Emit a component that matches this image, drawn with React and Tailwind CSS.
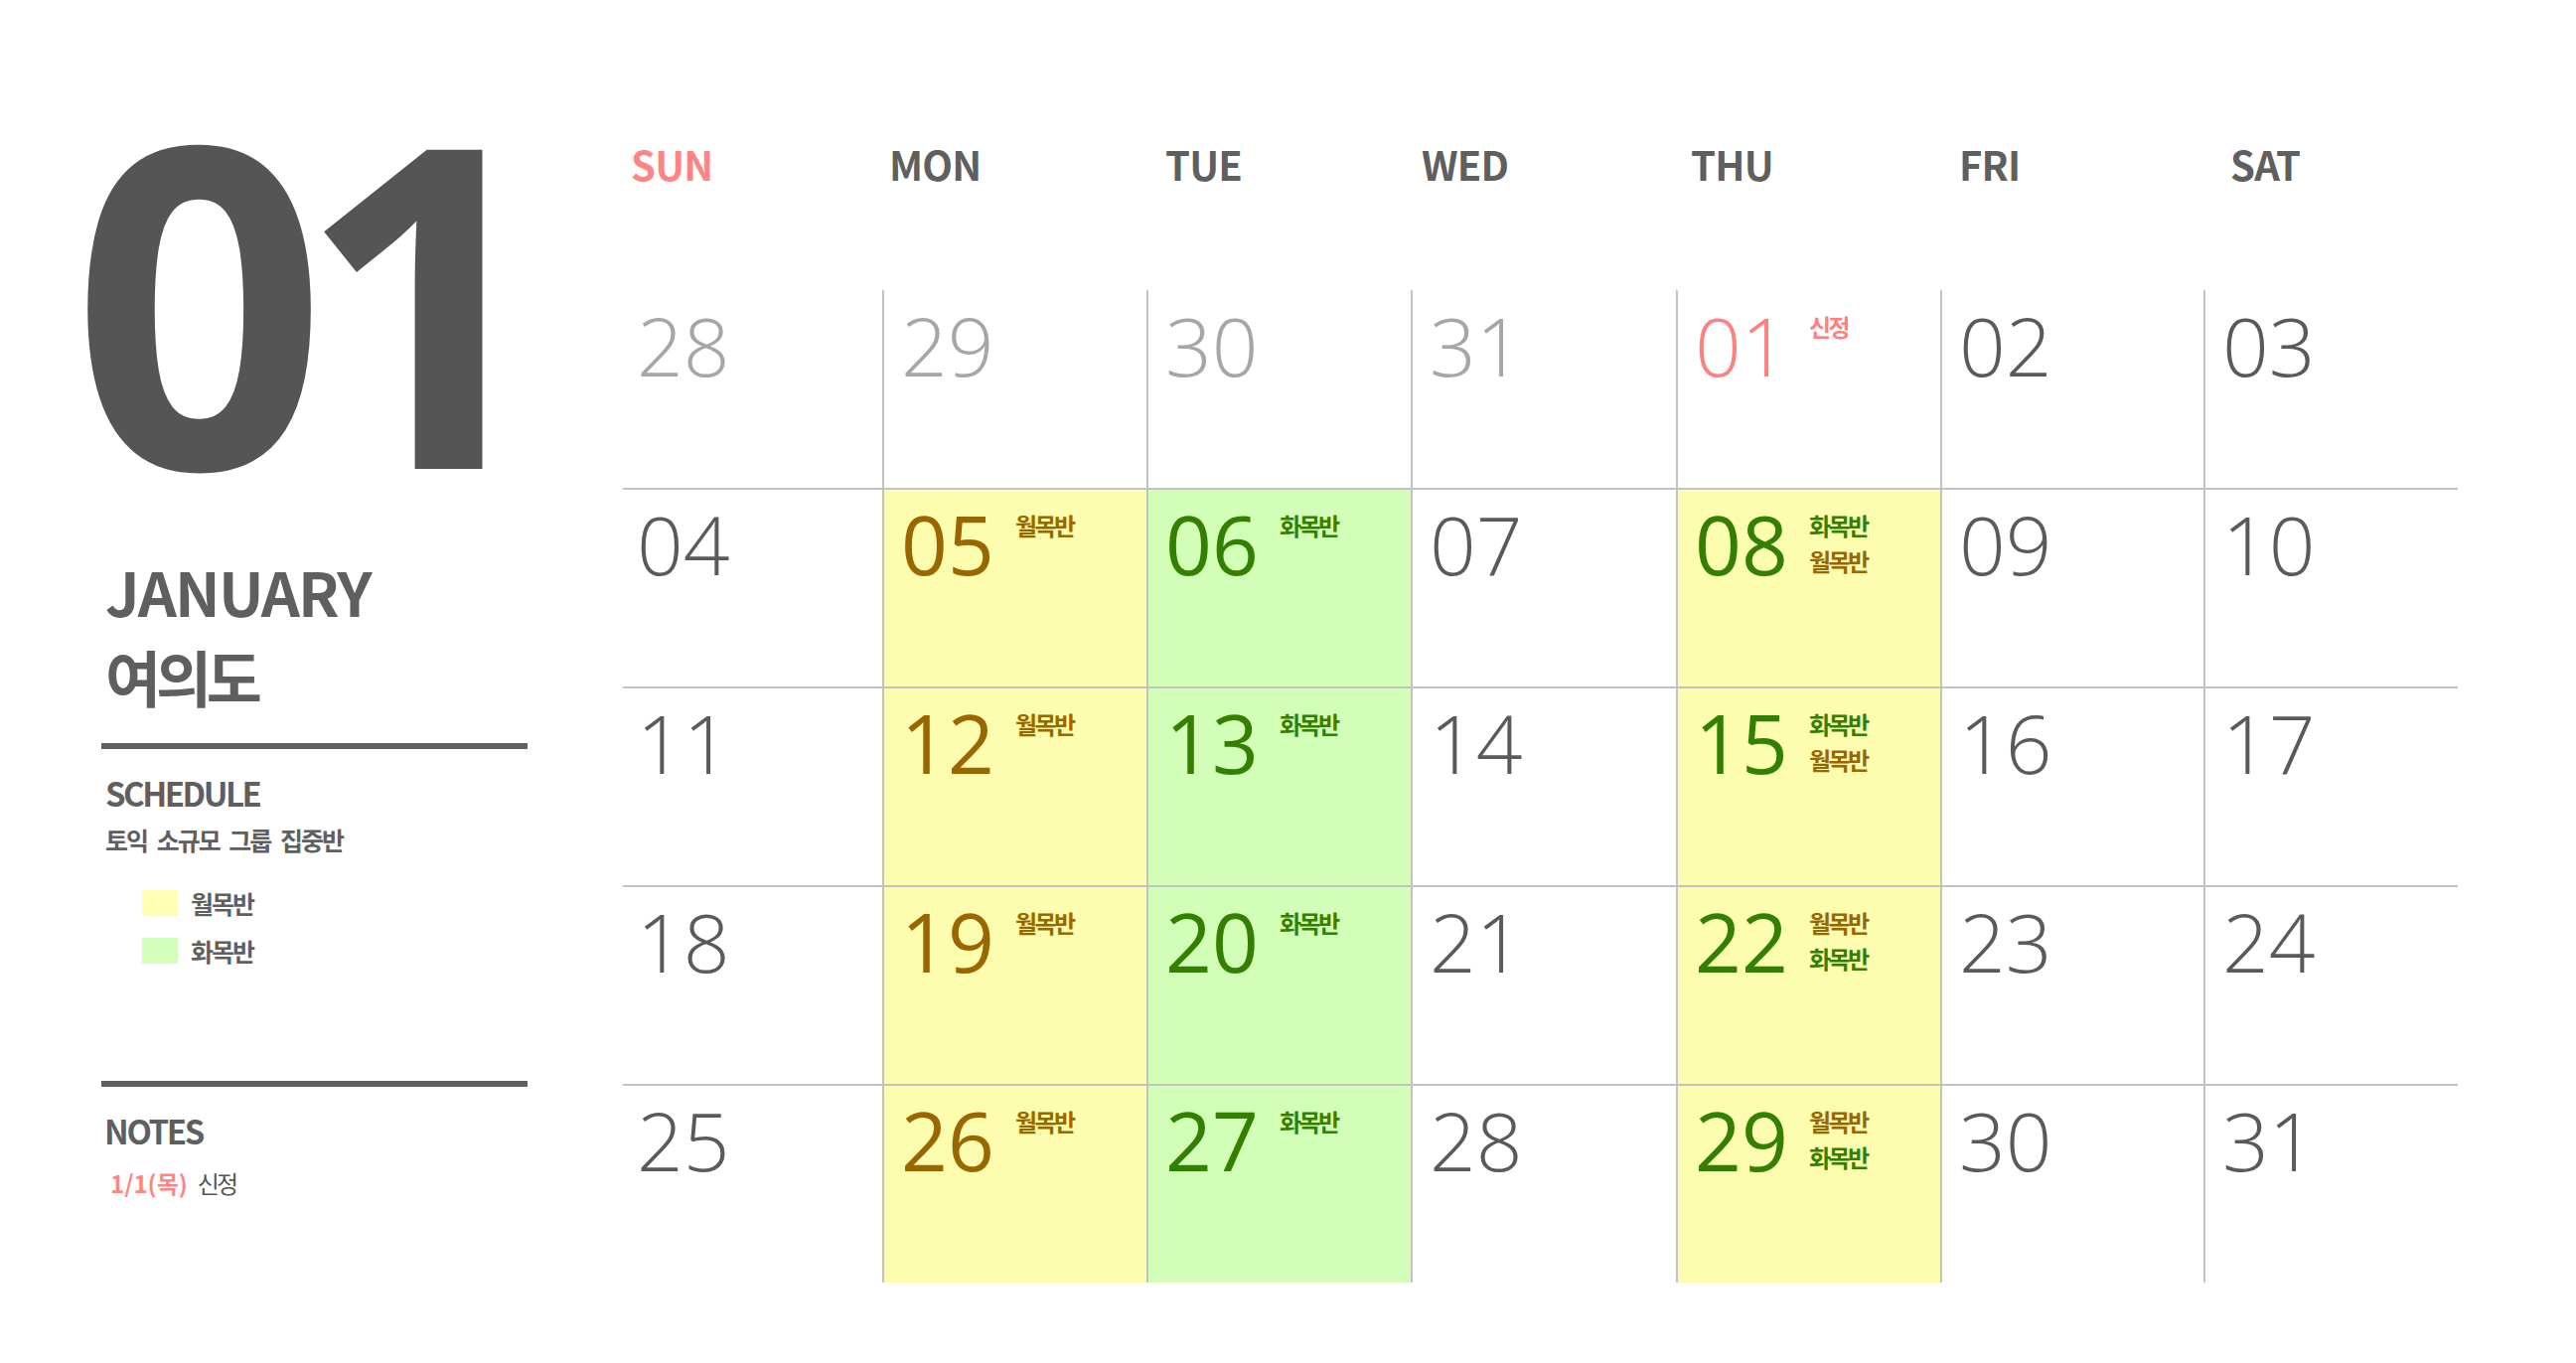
import React from "react";

const KO = "font-['Noto_Sans_CJK_KR',sans-serif]";
const NUM = "font-['Open_Sans',sans-serif]";

const COLS = "grid-cols-[262px_266px_266px_267px_266px_265px_256px]";

const days = [
    { name: "SUN", cls: "pl-[9px] text-[#ff8585]" },
    { name: "MON", cls: "pl-[7px] text-[#5f5f5f]" },
    { name: "TUE", cls: "pl-[19px] text-[#5f5f5f]" },
    { name: "WED", cls: "pl-[11px] text-[#5f5f5f]" },
    { name: "THU", cls: "pl-[15px] text-[#5f5f5f]" },
    { name: "FRI", cls: "pl-[19px] text-[#5f5f5f]" },
    { name: "SAT", cls: "pl-[27px] text-[#5f5f5f]" },
];

const LABELS = {
    mon: { text: "월목반", cls: "text-[#996600]" },
    tue: { text: "화목반", cls: "text-[#338000]" },
    hol: { text: "신정", cls: "text-[#ff8080]" },
};

const NUM_STYLE = {
    prev: "font-light text-[#a6a6a6]",
    norm: "font-light text-[#5a5a5a]",
    hol: "font-light text-[#ff8080]",
    mon: "font-normal text-[#996600]",
    tue: "font-normal text-[#338000]",
};

const BG = {
    mon: "bg-[#fdfdb0]",
    tue: "bg-[#d2feb8]",
};

// 월목반 = 노랑, 화목반 = 초록
const mon = (d) => ({ d, t: "mon", bg: "mon", labels: ["mon"] });
const tue = (d) => ({ d, t: "tue", bg: "tue", labels: ["tue"] });
const n = (d) => ({ d, t: "norm" });

const weeks = [
    [
        { d: "28", t: "prev" },
        { d: "29", t: "prev" },
        { d: "30", t: "prev" },
        { d: "31", t: "prev" },
        { d: "01", t: "hol", labels: ["hol"] },
        n("02"),
        n("03"),
    ],
    [n("04"), mon("05"), tue("06"), n("07"), { d: "08", t: "tue", bg: "mon", labels: ["tue", "mon"] }, n("09"), n("10")],
    [n("11"), mon("12"), tue("13"), n("14"), { d: "15", t: "tue", bg: "mon", labels: ["tue", "mon"] }, n("16"), n("17")],
    [n("18"), mon("19"), tue("20"), n("21"), { d: "22", t: "tue", bg: "mon", labels: ["mon", "tue"] }, n("23"), n("24")],
    [n("25"), mon("26"), tue("27"), n("28"), { d: "29", t: "tue", bg: "mon", labels: ["mon", "tue"] }, n("30"), n("31")],
];

const DayCell = ({ cell, row, col }) => {
    return (
        <div
            className={`flex items-start border-t-2 border-l-2 border-[#c2c2c2] pt-[13px] ${
                row === 0 ? "border-t-transparent" : ""
            } ${col === 0 ? "border-l-transparent pl-[13px]" : "pl-[17px]"} ${cell.bg ? BG[cell.bg] : "bg-white"}`}
        >
            <span
                className={`${NUM} shrink-0 text-[82px] leading-none ${col === 0 ? "w-[119px]" : "w-[115px]"} ${NUM_STYLE[cell.t]}`}
            >
                {cell.d}
            </span>
            {cell.labels && (
                <div className={`${KO} mt-[5px] flex flex-col text-[24px] font-bold leading-[36px] tracking-[-0.11em]`}>
                    {cell.labels.map((l) => (
                        <span key={l} className={LABELS[l].cls}>
                            {LABELS[l].text}
                        </span>
                    ))}
                </div>
            )}
        </div>
    );
};

const App = () => {
    return (
        <div className="min-h-screen w-full bg-white">
            <div className="flex items-start pl-[102px]">
                {/* 왼쪽 패널 */}
                <div className="w-[429px] shrink-0 pt-[73px]">
                    <div
                        className={`${NUM} -ml-[30px] whitespace-nowrap text-[450px] font-bold leading-none tracking-[-0.066em] text-[#555555]`}
                    >
                        01
                    </div>

                    <div className={`${KO} mt-[29px] pl-[4px] font-bold text-[#5f5f5f]`}>
                        <div className="text-[61px] leading-[86px] tracking-[-0.03em]">JANUARY</div>
                        <div className="text-[61px] leading-[86px] tracking-[-0.085em]">여의도</div>
                    </div>

                    <div className="mt-[24px] h-[6px] bg-[#606060]" />

                    <div className={`${KO} mt-[24px] pl-[4px] text-[33px] font-bold leading-[40px] tracking-[-0.075em] text-[#5f5f5f]`}>
                        SCHEDULE
                    </div>
                    <div
                        className={`${KO} mt-[11px] pl-[4px] text-[25px] font-bold leading-[32px] tracking-[-0.08em] [word-spacing:6px] text-[#5f5f5f]`}
                    >
                        토익 소규모 그룹 집중반
                    </div>

                    <div className="mt-[35px] flex flex-col gap-[22px] pl-[41px]">
                        <div className="flex items-center gap-[13px]">
                            <span className="h-[26px] w-[36px] bg-[#ffffb3]" />
                            <span className={`${KO} text-[25px] font-bold leading-[26px] tracking-[-0.08em] text-[#5f5f5f]`}>
                                월목반
                            </span>
                        </div>
                        <div className="flex items-center gap-[13px]">
                            <span className="h-[26px] w-[36px] bg-[#d3ffbb]" />
                            <span className={`${KO} text-[25px] font-bold leading-[26px] tracking-[-0.08em] text-[#5f5f5f]`}>
                                화목반
                            </span>
                        </div>
                    </div>

                    <div className="mt-[118px] h-[6px] bg-[#606060]" />

                    <div className={`${KO} mt-[24px] pl-[3px] text-[33px] font-bold leading-[40px] tracking-[-0.07em] text-[#5f5f5f]`}>
                        NOTES
                    </div>
                    <div className={`${KO} mt-[17px] flex items-baseline gap-[10px] pl-[9px] text-[24px] leading-[32px]`}>
                        <span className="font-bold text-[#ff8585]">1/1(목)</span>
                        <span className="tracking-[-0.12em] text-[#555555]">신정</span>
                    </div>
                </div>

                {/* 달력 */}
                <div className="ml-[95px] w-[1848px] shrink-0 pt-[141px]">
                    <div className={`grid ${COLS} h-[48px]`}>
                        {days.map((d) => (
                            <div
                                key={d.name}
                                className={`${KO} text-[40px] font-bold leading-[48px] tracking-[-0.02em] ${d.cls}`}
                            >
                                {d.name}
                            </div>
                        ))}
                    </div>

                    <div className={`mt-[102px] grid ${COLS} auto-rows-[200px]`}>
                        {weeks.map((week, r) =>
                            week.map((cell, c) => (
                                <DayCell key={`${r}-${c}`} cell={cell} row={r} col={c} />
                            ))
                        )}
                    </div>
                </div>
            </div>
        </div>
    );
};

export default App;
